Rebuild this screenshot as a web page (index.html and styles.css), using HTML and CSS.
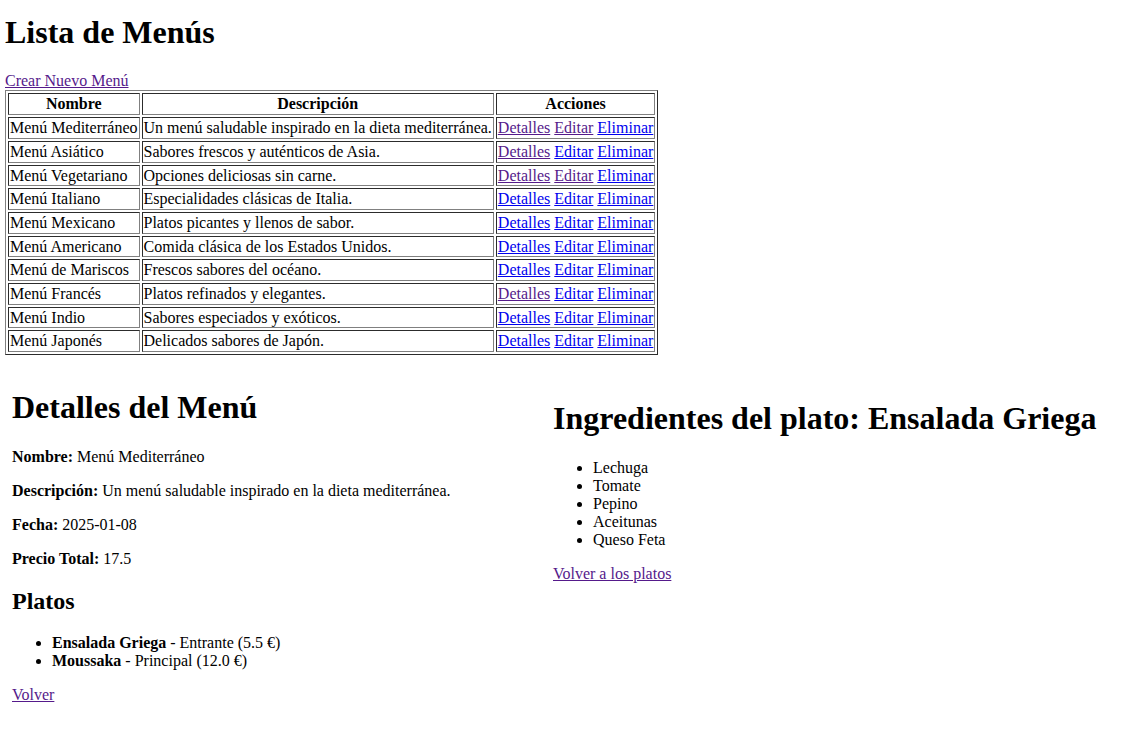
FILE: index.html
```html
<!DOCTYPE html>
<html lang="es">
<head>
<meta charset="utf-8">
<title>Lista de Menús</title>
<link rel="stylesheet" href="styles.css">
</head>
<body>
<h1 class="page-title">Lista de Menús</h1>
<a class="link visited" href="#">Crear Nuevo Menú</a>
<table class="menus">
  <thead>
    <tr><th>Nombre</th><th>Descripción</th><th>Acciones</th></tr>
  </thead>
  <tbody>
    <tr><td>Menú Mediterráneo</td><td>Un menú saludable inspirado en la dieta mediterránea.</td><td><a class="link visited" href="#">Detalles</a> <a class="link visited" href="#">Editar</a> <a class="link" href="#">Eliminar</a></td></tr>
    <tr><td>Menú Asiático</td><td>Sabores frescos y auténticos de Asia.</td><td><a class="link visited" href="#">Detalles</a> <a class="link" href="#">Editar</a> <a class="link" href="#">Eliminar</a></td></tr>
    <tr><td>Menú Vegetariano</td><td>Opciones deliciosas sin carne.</td><td><a class="link visited" href="#">Detalles</a> <a class="link visited" href="#">Editar</a> <a class="link" href="#">Eliminar</a></td></tr>
    <tr><td>Menú Italiano</td><td>Especialidades clásicas de Italia.</td><td><a class="link" href="#">Detalles</a> <a class="link" href="#">Editar</a> <a class="link" href="#">Eliminar</a></td></tr>
    <tr><td>Menú Mexicano</td><td>Platos picantes y llenos de sabor.</td><td><a class="link" href="#">Detalles</a> <a class="link" href="#">Editar</a> <a class="link" href="#">Eliminar</a></td></tr>
    <tr><td>Menú Americano</td><td>Comida clásica de los Estados Unidos.</td><td><a class="link" href="#">Detalles</a> <a class="link" href="#">Editar</a> <a class="link" href="#">Eliminar</a></td></tr>
    <tr><td>Menú de Mariscos</td><td>Frescos sabores del océano.</td><td><a class="link" href="#">Detalles</a> <a class="link" href="#">Editar</a> <a class="link" href="#">Eliminar</a></td></tr>
    <tr><td>Menú Francés</td><td>Platos refinados y elegantes.</td><td><a class="link visited" href="#">Detalles</a> <a class="link" href="#">Editar</a> <a class="link" href="#">Eliminar</a></td></tr>
    <tr><td>Menú Indio</td><td>Sabores especiados y exóticos.</td><td><a class="link" href="#">Detalles</a> <a class="link" href="#">Editar</a> <a class="link" href="#">Eliminar</a></td></tr>
    <tr><td>Menú Japonés</td><td>Delicados sabores de Japón.</td><td><a class="link" href="#">Detalles</a> <a class="link" href="#">Editar</a> <a class="link" href="#">Eliminar</a></td></tr>
  </tbody>
</table>

<div class="panels">
  <section class="panel panel-left">
    <h1 class="panel-title">Detalles del Menú</h1>
    <p><strong>Nombre:</strong> Menú Mediterráneo</p>
    <p><strong>Descripción:</strong> Un menú saludable inspirado en la dieta mediterránea.</p>
    <p><strong>Fecha:</strong> 2025-01-08</p>
    <p><strong>Precio Total:</strong> 17.5</p>
    <h2 class="sub-title">Platos</h2>
    <ul class="list">
      <li><strong>Ensalada Griega</strong> - Entrante (5.5 €)</li>
      <li><strong>Moussaka</strong> - Principal (12.0 €)</li>
    </ul>
    <a class="link visited" href="#">Volver</a>
  </section>
  <section class="panel panel-right">
    <h1 class="panel-title right-title">Ingredientes del plato: Ensalada Griega</h1>
    <ul class="list">
      <li>Lechuga</li>
      <li>Tomate</li>
      <li>Pepino</li>
      <li>Aceitunas</li>
      <li>Queso Feta</li>
    </ul>
    <p><a class="link visited" href="#">Volver a los platos</a></p>
  </section>
</div>
</body>
</html>
```

FILE: styles.css
```css
html, body {
  background: #ffffff;
}
body {
  margin: 0;
  padding: 0 5px 5px 5px;
  font-family: "Liberation Serif", "Times New Roman", serif;
  font-size: 16px;
  color: #000000;
}
.page-title {
  font-size: 32px;
  font-weight: bold;
  margin: 14px 0 21.44px 0;
}
.link {
  color: #0000ee;
  text-decoration: underline;
}
.link.visited {
  color: #551a8b;
}
.menus {
  border: 1px outset #808080;
  border-spacing: 2px;
  border-collapse: separate;
}
.menus th,
.menus td {
  border: 1px inset #808080;
  padding: 1px;
  line-height: 17.7px;
  text-align: left;
}
.menus th {
  text-align: center;
  font-weight: bold;
}
.panels {
  display: flex;
  align-items: flex-start;
}
.panel {
  box-sizing: border-box;
}
.panel-left {
  flex: 0 0 548px;
  padding-left: 7px;
}
.panel-right {
  flex: 1 1 auto;
}
.panel-title {
  font-size: 32px;
  font-weight: bold;
  margin: 34px 0 21.44px 0;
}
.right-title {
  margin-top: 45px;
}
.panel p {
  margin: 16px 0;
}
.sub-title {
  font-size: 24px;
  font-weight: bold;
  margin: 19.92px 0;
}
.list {
  margin: 16px 0;
  padding-left: 40px;
}
```
